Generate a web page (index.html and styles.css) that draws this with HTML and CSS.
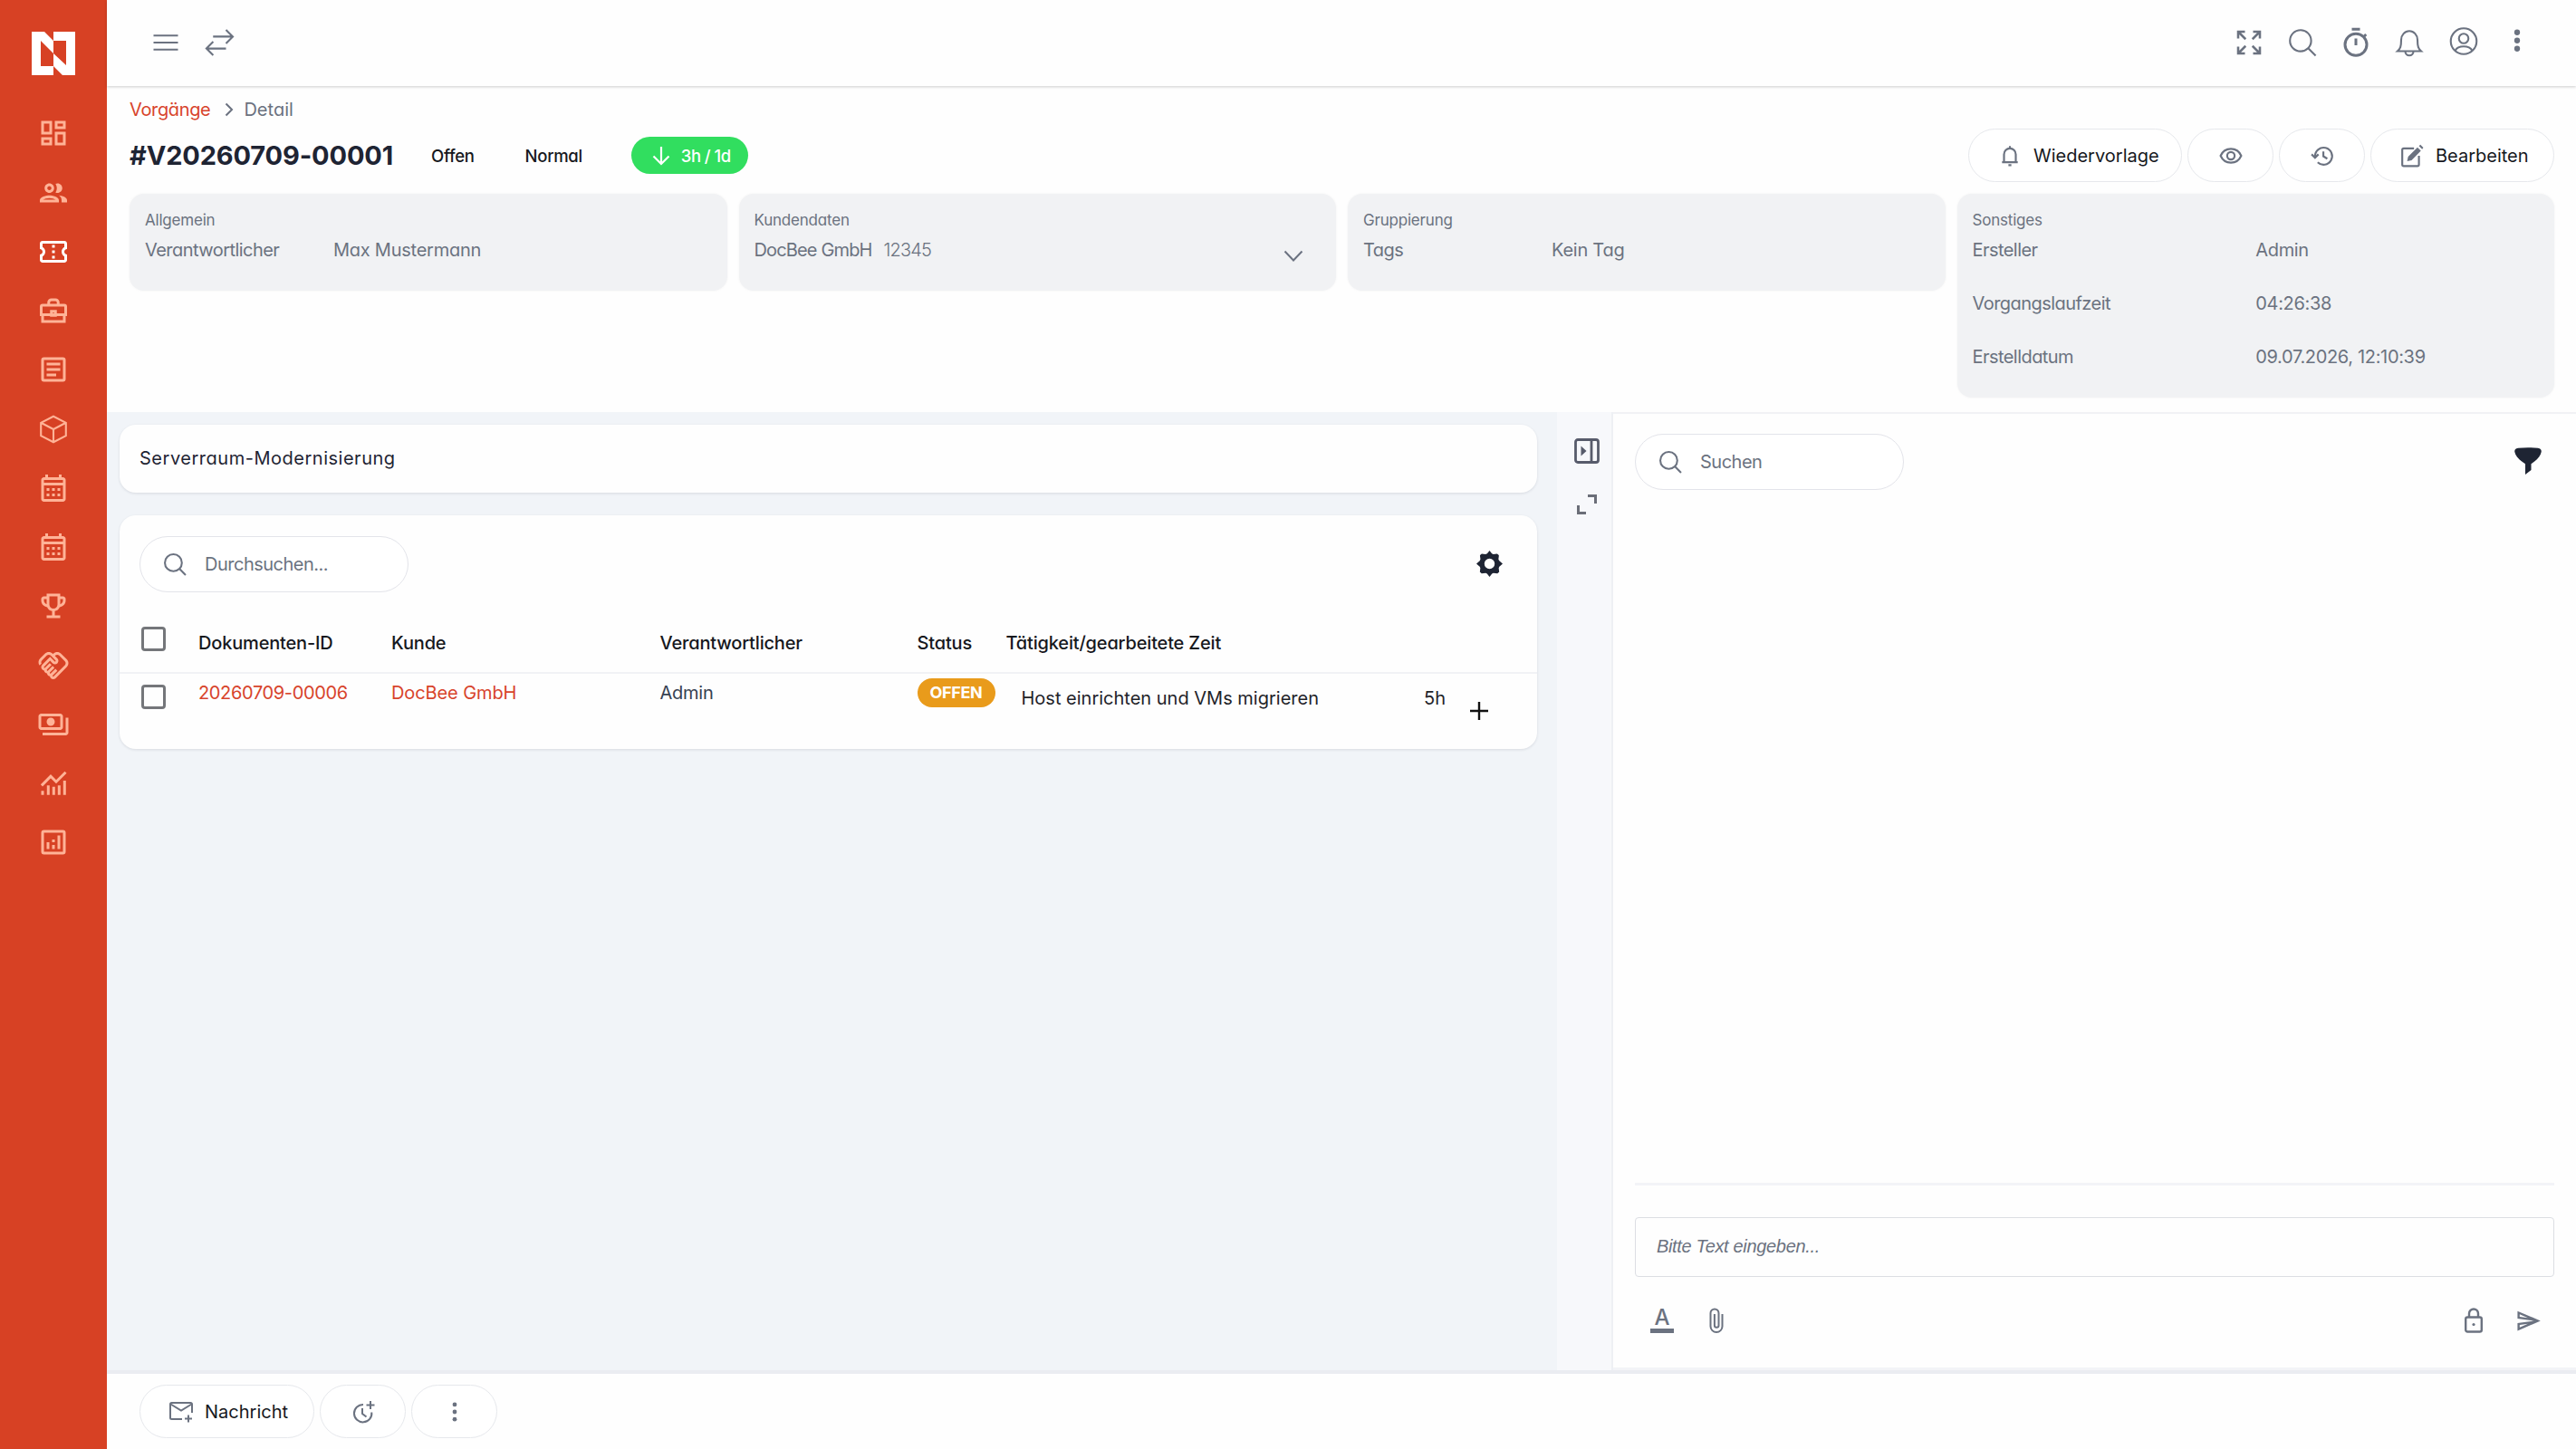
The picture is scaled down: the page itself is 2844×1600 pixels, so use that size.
FILE: index.html
```html
<!DOCTYPE html>
<html lang="de">
<head>
  <meta charset="UTF-8">
  <title>Vorgang #V20260709-00001</title>
  <link rel="stylesheet" href="styles.css">
</head>
<body>
  <nav class="sidebar">
    <svg class="logo" viewBox="0 0 48 48"><path fill-rule="evenodd" d="M0 0H14L24 10V0H48V48H34L24 38V48H0ZM10 10V38H24V24ZM24 10V24L38 37V10Z"/></svg>
    <svg class="icon" viewBox="0 0 24 24"><path d="M19 5v2h-4V5h4M9 5v6H5V5h4m10 8v6h-4v-6h4M9 17v2H5v-2h4M21 3h-8v6h8V3zM11 3H3v10h8V3zm10 8h-8v10h8V11zm-10 4H3v6h8v-6z"/></svg>
    <svg class="icon" viewBox="0 0 24 24"><path d="M9 13.75c-2.34 0-7 1.17-7 3.5V19h14v-1.75c0-2.33-4.66-3.5-7-3.5zM4.34 17c.84-.58 2.87-1.25 4.66-1.25s3.82.67 4.66 1.25H4.34zM9 12c1.93 0 3.5-1.57 3.5-3.5S10.93 5 9 5 5.5 6.57 5.5 8.5 7.07 12 9 12zm0-5c.83 0 1.5.67 1.5 1.5S9.83 10 9 10s-1.5-.67-1.5-1.5S8.17 7 9 7zm7.04 6.81c1.16.84 1.96 1.96 1.96 3.44V19h4v-1.75c0-2.02-3.5-3.17-5.96-3.44zM15 12c1.93 0 3.5-1.57 3.5-3.5S16.93 5 15 5c-.54 0-1.04.13-1.5.35.63.89 1 1.98 1 3.15s-.37 2.26-1 3.15c.46.22.96.35 1.5.35z"/></svg>
    <svg class="icon active" viewBox="0 0 24 24"><path d="M22 10V6c0-1.11-.9-2-2-2H4c-1.1 0-1.99.89-1.99 2v4c1.1 0 1.99.9 1.99 2s-.89 2-2 2v4c0 1.1.9 2 2 2h16c1.1 0 2-.9 2-2v-4c-1.1 0-2-.9-2-2s.9-2 2-2zm-2-1.46c-1.19.69-2 1.99-2 3.46s.81 2.77 2 3.46V18H4v-2.54c1.19-.69 2-1.99 2-3.46 0-1.48-.8-2.77-1.99-3.46L4 6h16v2.54zM11 15h2v2h-2zm0-4h2v2h-2zm0-4h2v2h-2z"/></svg>
    <svg class="icon line" viewBox="0 0 24 24"><path d="M4 8h16a1 1 0 0 1 1 1v6H3V9a1 1 0 0 1 1-1zM4 15v5h16v-5M8.5 8V6a2 2 0 0 1 2-2h3a2 2 0 0 1 2 2v2"/><path d="M10.5 12.5h3v3h-3z"/></svg>
    <svg class="icon line" viewBox="0 0 24 24"><path d="M5 4h14a1 1 0 0 1 1 1v14a1 1 0 0 1-1 1H5a1 1 0 0 1-1-1V5a1 1 0 0 1 1-1zM7 8h10M7 12h10M7 16h7"/></svg>
    <svg class="icon thin" viewBox="0 0 24 24"><path d="M12 2.5l9.2 4.7v9.6L12 21.5l-9.2-4.7V7.2zM2.8 7.2l9.2 4.8 9.2-4.8M12 12v9.5"/></svg>
    <svg class="icon" viewBox="0 0 24 24"><path d="M19 4h-1V2h-2v2H8V2H6v2H5c-1.11 0-1.99.9-1.99 2L3 20c0 1.1.89 2 2 2h14c1.1 0 2-.9 2-2V6c0-1.1-.9-2-2-2zm0 16H5V10h14v10zm0-12H5V6h14v2zM9 14H7v-2h2v2zm4 0h-2v-2h2v2zm4 0h-2v-2h2v2zm-8 4H7v-2h2v2zm4 0h-2v-2h2v2zm4 0h-2v-2h2v2z"/></svg>
    <svg class="icon" viewBox="0 0 24 24"><path d="M19 4h-1V2h-2v2H8V2H6v2H5c-1.11 0-1.99.9-1.99 2L3 20c0 1.1.89 2 2 2h14c1.1 0 2-.9 2-2V6c0-1.1-.9-2-2-2zm0 16H5V10h14v10zm0-12H5V6h14v2zM9 14H7v-2h2v2zm4 0h-2v-2h2v2zm4 0h-2v-2h2v2zm-8 4H7v-2h2v2zm4 0h-2v-2h2v2zm4 0h-2v-2h2v2z"/></svg>
    <svg class="icon" viewBox="0 0 24 24"><path d="M19 5h-2V3H7v2H5c-1.1 0-2 .9-2 2v1c0 2.55 1.92 4.63 4.39 4.94.63 1.5 1.98 2.63 3.61 2.96V19H7v2h10v-2h-4v-3.1c1.63-.33 2.98-1.46 3.61-2.96C19.08 12.63 21 10.55 21 8V7c0-1.1-.9-2-2-2zM5 8V7h2v3.82C5.84 10.4 5 9.3 5 8zm7 6c-1.65 0-3-1.35-3-3V5h6v6c0 1.65-1.35 3-3 3zm7-6c0 1.3-.84 2.4-2 2.82V7h2v1z"/></svg>
    <svg class="icon" viewBox="0 0 24 24"><path d="M12.22 19.85c-.18.18-.5.21-.71 0-.18-.18-.21-.5 0-.71l3.39-3.39-1.41-1.41-3.39 3.39c-.19.2-.51.19-.71 0-.21-.21-.18-.53 0-.71l3.39-3.39-1.41-1.41-3.39 3.39c-.18.18-.5.21-.71 0-.19-.19-.19-.51 0-.71l3.39-3.39-1.42-1.41-3.39 3.39c-.18.18-.5.21-.71 0-.19-.2-.19-.51 0-.71L9.52 8.4l1.87 1.86c.95.95 2.59.94 3.54 0 .98-.98.98-2.56 0-3.54l-1.86-1.86.28-.28c.78-.78 2.05-.78 2.83 0l4.24 4.24c.78.78.78 2.05 0 2.83l-8.2 8.2zm9.61-6.78c1.56-1.56 1.56-4.09 0-5.66l-4.24-4.24c-1.56-1.56-4.09-1.56-5.66 0l-.28.28-.28-.28c-1.56-1.56-4.09-1.56-5.66 0L2.17 6.71C.75 8.13.62 10.34 1.77 11.9l1.45-1.45c-.39-.75-.26-1.7.37-2.33l3.54-3.54c.78-.78 2.05-.78 2.83 0l3.56 3.56c.18.18.21.5 0 .71-.21.21-.53.18-.71 0L9.52 5.57l-5.8 5.79c-.98.97-.98 2.56 0 3.54.39.39.89.63 1.42.7.07.52.3 1.02.7 1.42.4.4.9.63 1.42.7.07.52.3 1.02.7 1.42.4.4.9.63 1.42.7.07.54.31 1.03.7 1.42.47.47 1.1.73 1.77.73.67 0 1.3-.26 1.77-.73l8.21-8.19z"/></svg>
    <svg class="icon" viewBox="0 0 24 24"><path d="M19 14V6c0-1.1-.9-2-2-2H3c-1.1 0-2 .9-2 2v8c0 1.1.9 2 2 2h14c1.1 0 2-.9 2-2zm-2 0H3V6h14v8zm-7-7c-1.66 0-3 1.34-3 3s1.34 3 3 3 3-1.34 3-3-1.34-3-3-3zm13 0v11c0 1.1-.9 2-2 2H4v-2h17V7h2z"/></svg>
    <svg class="icon line" viewBox="0 0 24 24"><path d="M3.3 13.6L10 6.8l4 4 7-7M4 20.5v-3M8.2 20.5v-7M12.2 20.5v-6M16.2 20.5v-7M20.2 20.5V10"/></svg>
    <svg class="icon line" viewBox="0 0 24 24"><path d="M5 4h14a1 1 0 0 1 1 1v14a1 1 0 0 1-1 1H5a1 1 0 0 1-1-1V5a1 1 0 0 1 1-1zM8 12v5M12 14v3M12 10v2M16 7v10"/></svg>
  </nav>

  <div class="main">
    <header class="topbar">
      <svg class="icon thin" viewBox="0 0 24 24"><path d="M3 6.8h18M3 12h18M3 17.2h18"/></svg>
      <svg class="icon thin" viewBox="0 0 24 24"><path d="M7.5 7.6h14M17 2.6l5 5-5 5M17 16.4H3M7.6 11.4l-5 5 5 5"/></svg>
      <div class="spacer"></div>
      <svg class="icon mid" viewBox="0 0 24 24"><path d="M4 9V4h5M4 4l5.500 5.500M15 4h5v5M20 4l-5.500 5.500M4 15v5h5M4 20l5.500-5.500M20 15v5h-5M20 20l-5.500-5.500"/></svg>
      <svg class="icon thin" viewBox="0 0 24 24"><circle cx="10.600" cy="10.600" r="7.800"/><path d="M16.200 16.200l5.500 5.500"/></svg>
      <svg class="icon line" viewBox="0 0 24 24"><circle cx="12" cy="13.500" r="8"/><path d="M9 2.200h6M12 9v5M18 7.500l1.500-1.500"/></svg>
      <svg class="icon thin" viewBox="0 0 24 24"><path d="M3.300 18.300c2-1.800 2.700-3 2.700-8.300a6 6.500 0 0 1 12 0c0 5.300.7 6.500 2.700 8.300zM9 18.500a3 3 0 0 0 6 0"/></svg>
      <svg class="icon thin" viewBox="0 0 24 24"><circle cx="12" cy="11" r="9.500"/><circle cx="12" cy="9" r="3.500"/><path d="M5.800 17.800c1.200-2.300 3.500-3 6.200-3s5 .7 6.200 3"/></svg>
      <svg class="icon" viewBox="0 0 24 24"><circle cx="12" cy="4.500" r="2.100"/><circle cx="12" cy="10.500" r="2.100"/><circle cx="12" cy="16.500" r="2.100"/></svg>
    </header>

    <section class="head">
      <div class="crumbs">
        <a class="link">Vorgänge</a>
        <svg class="crumb-arrow" viewBox="0 0 10 16"><path d="M1.500 1.500l6.500 6.500-6.500 6.500"/></svg>
        <span>Detail</span>
      </div>
      <div class="title-row">
        <h1>#V20260709-00001</h1>
        <span class="chip chip-state">Offen</span>
        <span class="chip chip-prio">Normal</span>
        <span class="time-pill">
          <svg class="pill-arrow" viewBox="0 0 20 22"><path d="M10 1v18M1.500 11.500L10 20l8.500-8.500"/></svg>
          3h / 1d
        </span>
        <div class="spacer"></div>
        <div class="actions">
          <button class="btn remind">
            <svg class="icon-s" viewBox="0 0 24 24"><path d="M4 18.500h16M6 18.500V10.500a6 6 0 0 1 12 0v8M12 2v2.500M10.500 21.500h3"/></svg>
            Wiedervorlage
          </button>
          <button class="btn only"><svg class="icon-s" viewBox="0 0 24 24"><path d="M1.500 12C3.500 7.500 7.500 5 12 5s8.500 2.500 10.500 7c-2 4.500-6 7-10.500 7S3.500 16.500 1.500 12z"/><circle cx="12" cy="12" r="3.800"/></svg></button>
          <button class="btn only"><svg class="icon-s" viewBox="0 0 24 24"><path d="M4.500 12.500a8.700 8.700 0 1 1 2.700 6.200M1 10.500l3.500 3.500L8 10.500M13 7.500v5l4 2.500"/></svg></button>
          <button class="btn edit">
            <svg class="icon-s" viewBox="0 0 24 24"><path d="M14 4.500H3.500a1.500 1.500 0 0 0-1.500 1.500v15A1.500 1.500 0 0 0 3.500 22.500h14a1.500 1.500 0 0 0 1.500-1.500V12"/><path class="solid" d="M8 13l9.500-9.500 3.500 3.500-9.500 9.500L7 17.500zM19 2l1.500-1.200 3 3L22.300 5.300z"/></svg>
            Bearbeiten
          </button>
        </div>
      </div>
      <div class="cards">
        <div class="info">
          <div class="info-title">Allgemein</div>
          <div class="info-row"><span class="label">Verantwortlicher</span><span>Max Mustermann</span></div>
        </div>
        <div class="info">
          <div class="info-title">Kundendaten</div>
          <div class="customer"><span>DocBee GmbH</span><span class="number">12345</span>
            <svg class="chevron" viewBox="0 0 22 14"><path d="M1.500 1.500L11 11.500l9.500-10"/></svg>
          </div>
        </div>
        <div class="info">
          <div class="info-title">Gruppierung</div>
          <div class="info-row"><span class="label">Tags</span><span>Kein Tag</span></div>
        </div>
        <div class="info tall">
          <div class="info-title">Sonstiges</div>
          <div class="info-row half"><span class="label">Ersteller</span><span>Admin</span></div>
          <div class="info-row half"><span class="label">Vorgangslaufzeit</span><span>04:26:38</span></div>
          <div class="info-row half"><span class="label">Erstelldatum</span><span>09.07.2026, 12:10:39</span></div>
        </div>
      </div>
    </section>

    <div class="work">
      <section class="left">
        <div class="panel subject">Serverraum-Modernisierung</div>
        <div class="panel docs">
          <div class="docs-bar">
            <div class="search">
              <svg class="search-icon" viewBox="0 0 24 24"><circle cx="10" cy="10" r="9"/><path d="M16.400 16.400L23 23"/></svg>
              <span>Durchsuchen...</span>
            </div>
            <svg class="gear" viewBox="0 0 28 28"><path fill-rule="evenodd" d="M11.500 3.200L14 0l2.500 3.200 1.600.7 4-.5 1.500 1.200.4.600-.5 3.900.7 1.600L28 14l-3.600 3.100-.6 1.500.5 4.100-1.900 1.700-4.300-.4-1.500.7L14 28l-2.600-3.300-1.500-.7-4.300.4-1.900-1.700.5-4.100-.6-1.500L0 14l3.600-3.200.7-1.600-.5-3.900.4-.7 1.500-1.200 4 .5zM14 8.500a5.500 5.500 0 1 0 0 11a5.500 5.500 0 1 0 0-11z"/></svg>
          </div>
          <div class="row head-row">
            <span class="check"></span>
            <span>Dokumenten-ID</span>
            <span>Kunde</span>
            <span>Verantwortlicher</span>
            <span>Status</span>
            <span>Tätigkeit/gearbeitete Zeit</span>
          </div>
          <div class="row body-row">
            <span class="check"></span>
            <a class="link">20260709-00006</a>
            <a class="link">DocBee GmbH</a>
            <span class="owner">Admin</span>
            <span class="badge">OFFEN</span>
            <div class="task">
              <span class="task-name">Host einrichten und VMs migrieren</span>
              <span class="task-time">5h</span>
              <svg class="plus" viewBox="0 0 20 20"><path d="M10 0v20M0 10h20"/></svg>
            </div>
          </div>
        </div>
      </section>

      <aside class="strip">
        <svg class="strip-panel" viewBox="0 0 28 28"><rect x="1.500" y="1.500" width="25" height="25" rx="2.500"/><path d="M19 1.500v25"/><path class="solid" d="M7.500 8.500v11l6-5.500z"/></svg>
        <svg class="strip-expand" viewBox="0 0 22 22"><path d="M12 1.500h8.500V10M1.500 12v8.500H10"/></svg>
      </aside>

      <section class="chat">
        <div class="chat-bar">
          <div class="search">
            <svg class="search-icon" viewBox="0 0 24 24"><circle cx="10" cy="10" r="9"/><path d="M16.400 16.400L23 23"/></svg>
            <span>Suchen</span>
          </div>
          <svg class="filter" viewBox="0 0 30 30"><path d="M4 .8C11 0 19 0 26 .8c3 .4 4 2.200 3.700 4.200-.8 4.500-4.500 9-11.200 13.200V25L12 30V18.200C5 14 1.200 9.500.3 5 0 3 1 1.200 4 .8z"/></svg>
        </div>
        <div class="messages"></div>
        <div class="editor">Bitte Text eingeben...</div>
        <div class="tools">
          <span class="tool-color">A</span>
          <svg class="clip" viewBox="0 0 16 28"><path d="M14.500 7v13.500a6.500 6.500 0 0 1-13 0V6a4.500 4.500 0 0 1 9 0v13.500a2.300 2.300 0 0 1-4.600 0V7"/></svg>
          <div class="spacer"></div>
          <svg class="lock" viewBox="0 0 20 28"><rect x="1.200" y="10.500" width="17.600" height="16" rx="2"/><path d="M5 10.500V6.500a5 5 0 0 1 10 0v4"/><circle class="solid" cx="10" cy="18.500" r="1.600"/></svg>
          <svg class="send" viewBox="0 0 24 24"><path d="M4.010 6.030l7.510 3.220-7.520-1 .010-2.220m7.500 8.720L4 17.970v-2.220l7.510-1M2.010 3L2 10l15 2-15 2 .010 7L23 12 2.010 3z"/></svg>
        </div>
      </section>
    </div>

    <footer class="bottom">
      <button class="btn message">
        <svg class="icon-s" viewBox="0 0 26 24"><path d="M25 13V3.500a1.500 1.500 0 0 0-1.500-1.500h-21A1.500 1.500 0 0 0 1 3.500v15A1.500 1.500 0 0 0 2.500 20H14M1.500 3.500L13 10.500l11.500-7M21 15.500v8M17 19.500h8"/></svg>
        Nachricht
      </button>
      <button class="btn only"><svg class="icon-s" viewBox="0 0 26 26"><path d="M13 5a9.700 9.700 0 1 0 9.300 8.500M12 9v6l4.500 3.500M21 1v9M16.500 5.500h9"/></svg></button>
      <button class="btn only"><svg class="icon-s dots" viewBox="0 0 24 24"><circle cx="12" cy="4.500" r="2.200"/><circle cx="12" cy="12" r="2.200"/><circle cx="12" cy="19.500" r="2.200"/></svg></button>
    </footer>
  </div>
</body>
</html>
```
FILE: styles.css
```css
* {
  box-sizing: border-box;
}

body {
  margin: 0;
  display: flex;
  height: 1600px;
  font-family: Inter, "Liberation Sans", sans-serif;
  font-feature-settings: "cv11";
  font-size: 20px;
  letter-spacing: -0.25px;
  color: #6b7280;
  background-color: #fefefe;
}

svg {
  display: block;
  flex: none;
  fill: none;
  stroke: none;
}

.spacer {
  flex: 1;
}

.link {
  color: #d8442c;
  letter-spacing: -0.35px;
}

.icon {
  width: 36px;
  height: 36px;
  fill: currentColor;
}

.icon.line,
.icon.mid,
.icon.thin {
  fill: none;
  stroke: currentColor;
  stroke-width: 2;
}

.icon.mid {
  stroke-width: 1.7;
}

.icon.thin {
  stroke-width: 1.4;
}

.solid {
  fill: currentColor;
  stroke: none;
}

/* sidebar */
.sidebar {
  width: 118px;
  flex: none;
  display: flex;
  flex-direction: column;
  align-items: center;
  gap: 29.25px;
  padding-top: 35px;
  background-color: #d74124;
  color: #ffb397;
}

.sidebar .active {
  color: #ffffff;
}

.logo {
  width: 48px;
  height: 48px;
  margin-bottom: 17px;
  fill: #ffffff;
}

.main {
  flex: 1;
  min-width: 0;
  display: flex;
  flex-direction: column;
}

/* top bar */
.topbar {
  height: 95px;
  flex: none;
  display: flex;
  align-items: center;
  gap: 23.3px;
  padding: 0 47px 1px 47px;
  box-shadow: 0 1px 3px rgba(0, 0, 0, 0.2);
}

/* ticket head */
.head {
  height: 360px;
  flex: none;
  padding: 4px 24px 0 25px;
}

.crumbs {
  height: 43px;
  display: flex;
  align-items: center;
  letter-spacing: 0;
}

.crumb-arrow {
  width: 10px;
  height: 16px;
  margin: 0 11px 0 16px;
  stroke: #6b7280;
  stroke-width: 2;
}

.title-row {
  height: 59px;
  display: flex;
  align-items: center;
}

h1 {
  margin: 0;
  font-size: 29px;
  font-weight: 700;
  letter-spacing: -0.15px;
  color: #1e2433;
}

.chip {
  font-size: 18.5px;
  font-weight: 500;
  letter-spacing: -0.3px;
  color: #16181d;
}

.chip-state {
  margin-left: 42px;
}

.chip-prio {
  margin-left: 56px;
}

.time-pill {
  display: flex;
  align-items: center;
  gap: 12px;
  width: 129px;
  height: 41px;
  margin-left: 54px;
  padding-left: 23px;
  border-radius: 21px;
  font-size: 18.5px;
  font-weight: 500;
  letter-spacing: -0.55px;
  white-space: nowrap;
  color: #ffffff;
  background-color: #31de5f;
}

.pill-arrow {
  width: 20px;
  height: 22px;
  stroke: #ffffff;
  stroke-width: 2.2;
}

.actions {
  display: flex;
  gap: 6px;
}

.btn {
  display: flex;
  align-items: center;
  height: 59px;
  padding: 0 0 0 32px;
  gap: 13px;
  border: 1.5px solid #e6e8ec;
  border-radius: 30px;
  font: inherit;
  font-feature-settings: normal;
  letter-spacing: 0;
  color: #16181d;
  background-color: #ffffff;
}

.remind {
  width: 236px;
}

.edit {
  width: 203px;
}

.message {
  width: 193px;
}

.icon-s {
  width: 26px;
  height: 26px;
  stroke: #6b7280;
  stroke-width: 2;
  color: #6b7280;
}

.icon-s.dots {
  fill: #6b7280;
  stroke: none;
}

.btn.only {
  width: 95px;
  padding: 0;
  justify-content: center;
}

.cards {
  display: grid;
  grid-template-columns: repeat(4, 1fr);
  gap: 13px;
  align-items: start;
  margin-top: 13px;
}

.info {
  height: 107px;
  padding: 14px 17px 0;
  border-radius: 16px;
  background-color: #f1f2f4;
  box-shadow: 0 0 3px rgba(0, 0, 0, 0.05);
}

.info.tall {
  height: 225px;
}

.info-title {
  height: 30px;
  line-height: 30px;
  font-size: 17px;
  letter-spacing: -0.2px;
}

.info-row {
  display: grid;
  grid-template-columns: 208px 1fr;
  height: 59px;
  line-height: 37px;
}

.info-row.half {
  grid-template-columns: 1fr 1fr;
  letter-spacing: -0.33px;
}

.label {
  letter-spacing: -0.55px;
}

.customer {
  display: flex;
  line-height: 37px;
  letter-spacing: -0.85px;
}

.number {
  margin-left: 13px;
  font-weight: 300;
}

.chevron {
  width: 22px;
  height: 14px;
  margin: 18px 19px 0 auto;
  stroke: #6b7280;
  stroke-width: 2;
}

/* work area */
.work {
  flex: 1;
  min-height: 0;
  display: flex;
  border-bottom: 4px solid #eaecf1;
  background-color: #f1f4f8;
}

.left {
  width: 1601px;
  flex: none;
  padding: 14px 22px 0 14px;
}

.panel {
  border-radius: 18px;
  background-color: #fefefe;
  box-shadow: 0 1px 3px rgba(30, 41, 59, 0.12);
}

.subject {
  height: 75px;
  padding-left: 22px;
  line-height: 75px;
  letter-spacing: 0.52px;
  color: #1e2433;
}

.docs {
  height: 258px;
  margin-top: 25px;
}

.docs-bar {
  display: flex;
  justify-content: space-between;
  padding: 23px 38px 0 22px;
}

.search {
  width: 297px;
  height: 62px;
  display: flex;
  align-items: center;
  gap: 20px;
  padding-left: 26px;
  border: 1.5px solid #e3e4ea;
  border-radius: 31px;
  letter-spacing: -0.5px;
  background-color: #ffffff;
}

.search-icon {
  width: 25px;
  height: 25px;
  stroke: #6b7280;
  stroke-width: 2;
}

.gear {
  width: 29px;
  height: 29px;
  margin-top: 16px;
  fill: #1e2433;
}

.row {
  display: grid;
  grid-template-columns: 63px 213px 296.5px 284px 98px 1fr;
  align-items: start;
  padding-left: 24px;
}

.head-row {
  height: 90px;
  padding-top: 36px;
  line-height: 41px;
  font-weight: 500;
  letter-spacing: -0.17px;
  color: #16181d;
  border-bottom: 2px solid #f1f2f5;
}

.check {
  width: 27px;
  height: 27px;
  border: 3px solid #74767a;
  border-radius: 4px;
}

.head-row .check {
  margin-top: 2px;
}

.body-row {
  line-height: 42px;
}

.body-row .link:nth-child(3) {
  letter-spacing: -0.1px;
}

.body-row .check {
  margin-top: 12px;
}

.owner {
  color: #374151;
}

.badge {
  width: 86px;
  height: 32px;
  margin-top: 5px;
  border-radius: 16px;
  line-height: 32px;
  text-align: center;
  font-size: 18px;
  font-weight: 700;
  letter-spacing: -0.35px;
  color: #ffffff;
  background-color: #e99b1b;
}

.task {
  display: flex;
  padding: 6px 54px 0 17px;
  letter-spacing: 0;
  color: #1f2329;
}

.task-name {
  flex: 1;
}

.plus {
  width: 20px;
  height: 20px;
  margin: 25px 0 0 27px;
  stroke: #111111;
  stroke-width: 2.4;
}

.strip {
  width: 62px;
  flex: none;
  display: flex;
  flex-direction: column;
  align-items: center;
  padding: 29px 0 0 6px;
  border-right: 2px solid #eef0f4;
  background-color: #f7f8fb;
}

.strip-panel {
  width: 28px;
  height: 28px;
  color: #575b6b;
  stroke: #575b6b;
  stroke-width: 2.8;
}

.strip-expand {
  width: 22px;
  height: 22px;
  margin-top: 34px;
  stroke: #6b6e78;
  stroke-width: 3;
}

/* chat */
.chat {
  flex: 1;
  display: flex;
  flex-direction: column;
  padding: 22px 24px 0;
  border-top: 2px solid #f1f2f5;
  border-bottom: 3px solid #f3f4f7;
  background-color: #fefefe;
}

.chat-bar {
  display: flex;
  justify-content: space-between;
  padding-right: 14px;
}

.filter {
  width: 30px;
  height: 30px;
  margin-top: 15px;
  fill: #1e2433;
}

.messages {
  flex: 1;
  border-bottom: 3px solid #f3f4f7;
}

.editor {
  height: 66px;
  margin-top: 35px;
  padding-left: 23px;
  border: 1.5px solid #dcdee3;
  border-radius: 4px;
  line-height: 62px;
  font-family: "Liberation Sans", sans-serif;
  font-style: italic;
  letter-spacing: -0.33px;
}

.tools {
  height: 100px;
  display: flex;
  align-items: center;
  padding: 0 14px 4px 17px;
}

.tool-color {
  width: 26px;
  height: 28px;
  border-bottom: 5px solid #6b7280;
  line-height: 22px;
  text-align: center;
  font-size: 24px;
  font-weight: 500;
}

.clip {
  width: 16px;
  height: 28px;
  margin-left: 39px;
  stroke: #6b7280;
  stroke-width: 2;
}

.lock {
  width: 20px;
  height: 28px;
  color: #6b7280;
  stroke: #6b7280;
  stroke-width: 2.4;
}

.send {
  width: 29px;
  height: 29px;
  margin-left: 36px;
  fill: #6b7280;
}

/* bottom bar */
.bottom {
  height: 83px;
  flex: none;
  display: flex;
  gap: 6px;
  padding: 12px 0 0 36px;
}
```
